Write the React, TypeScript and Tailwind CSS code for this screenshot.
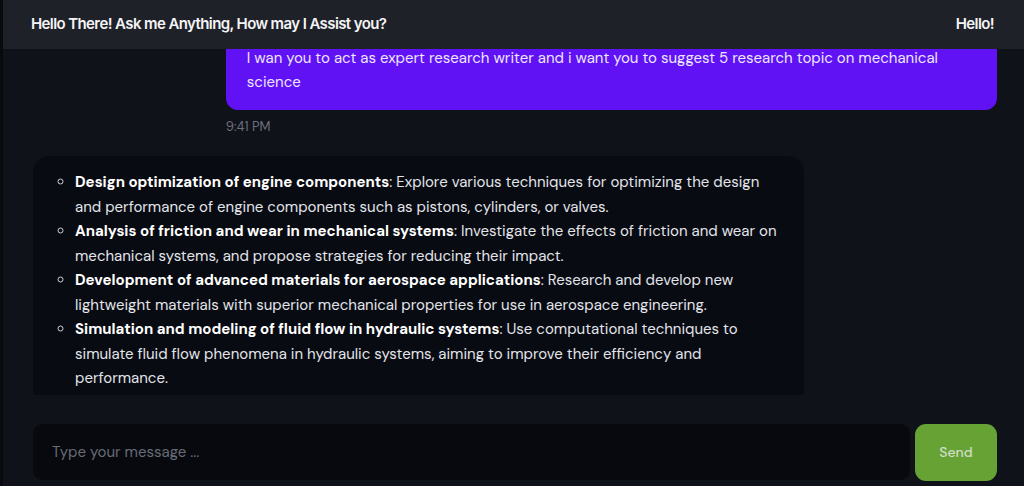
import React, { useLayoutEffect, useRef } from "react";

const topics = [
  {
    title: "Design optimization of engine components",
    body: "Explore various techniques for optimizing the design and performance of engine components such as pistons, cylinders, or valves.",
  },
  {
    title: "Analysis of friction and wear in mechanical systems",
    body: "Investigate the effects of friction and wear on mechanical systems, and propose strategies for reducing their impact.",
  },
  {
    title: "Development of advanced materials for aerospace applications",
    body: "Research and develop new lightweight materials with superior mechanical properties for use in aerospace engineering.",
  },
  {
    title: "Simulation and modeling of fluid flow in hydraulic systems",
    body: "Use computational techniques to simulate fluid flow phenomena in hydraulic systems, aiming to improve their efficiency and performance.",
  },
  {
    title: "Vibration analysis and control in mechanical structures",
    body: "Study vibration behaviour of machines and structures and design methods to reduce noise and fatigue.",
  },
];

export default function App() {
  const scrollRef = useRef<HTMLDivElement>(null);
  useLayoutEffect(() => {
    if (scrollRef.current) scrollRef.current.scrollTop = 19;
  }, []);

  return (
    <div
      className="flex h-[486px] w-full bg-[#10121a] text-[#e4e6eb]"
      style={{ fontFamily: "'DM Sans', Inter, 'Noto Sans', sans-serif" }}
    >
      <div className="w-[3px] shrink-0 bg-[#0a0a0d]" />
      <div className="flex min-w-0 flex-1 flex-col">
        <header
          className="flex h-[49px] shrink-0 items-center justify-between bg-[#1f2129] pl-[28px] pr-[30px] text-[15px] font-semibold tracking-[-0.6px] text-[#f4f4f6]"
          style={{ fontFamily: "Inter, 'Noto Sans', sans-serif" }}
        >
          <span>Hello There! Ask me Anything, How may I Assist you?</span>
          <span>Hello!</span>
        </header>

        <div
          ref={scrollRef}
          className="h-[346px] shrink-0 overflow-hidden pl-[30px] pr-[27px]"
        >
          <div className="flex flex-col pb-10">
            <div className="flex flex-col items-end">
              <div className="w-[80%] rounded-b-[12px] rounded-tl-[12px] bg-[#6112f5] px-[21px] py-4 text-[15px] leading-[24px] text-[#ece6ff]">
                I wan you to act as expert research writer and i want you to suggest 5 research topic on mechanical science
              </div>
              <div className="mt-[7px] w-[80%] text-[13px] leading-[20px] text-[#6c707a]">
                9:41 PM
              </div>
            </div>

            <div className="mt-[19px] w-[80%] rounded-[16px] bg-[#090b12] px-[18px] pb-6 pt-[14px]">
              <ul className="list-[circle] pl-6 text-[15px] leading-[24.5px] text-[#e2e4ea] marker:text-[#d0d2d8]">
                {topics.map((t) => (
                  <li key={t.title}>
                    <strong className="font-bold text-white">{t.title}</strong>: {t.body}
                  </li>
                ))}
              </ul>
            </div>
          </div>
        </div>

        <div className="flex flex-1 items-start gap-[5px] pl-[30px] pr-[27px] pt-[29px]">
          <div className="flex h-[56px] flex-1 items-center rounded-[9px] bg-[#07090f] pl-[19px] pt-px">
            <input
              className="w-full bg-transparent text-[15px] text-[#e4e6eb] outline-none placeholder:text-[#686c76]"
              placeholder="Type your message ..."
            />
          </div>
          <button className="flex h-[57px] w-[82px] items-center justify-center rounded-[11px] bg-[#66a334] text-[14px] font-medium text-[#d3dcca]">
            Send
          </button>
        </div>
      </div>
    </div>
  );
}
